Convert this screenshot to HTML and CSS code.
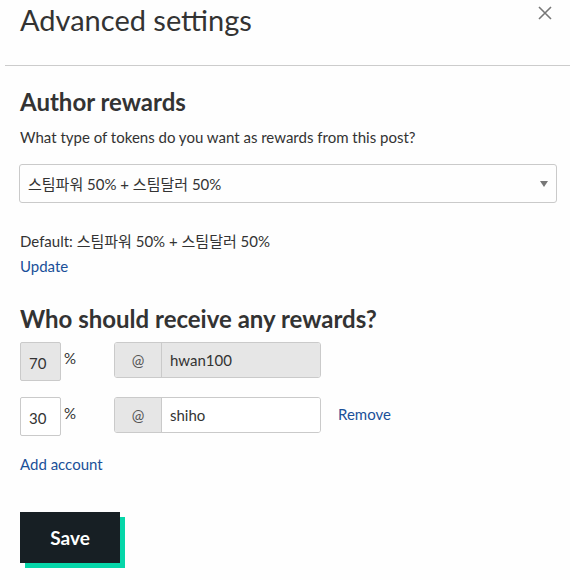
FILE: index.html
```html
<!DOCTYPE html>
<html>
<head>
<meta charset="utf-8">
<link rel="stylesheet" href="styles.css">
</head>
<body>
<div class="modal">
  <div class="header">
    <h1 class="title">Advanced settings</h1>
    <button class="close" aria-label="Close">
      <svg width="14" height="14" viewBox="0 0 14 14"><path d="M1 1 L13 13 M13 1 L1 13" stroke="#777" stroke-width="1.6" fill="none"/></svg>
    </button>
  </div>
  <hr class="divider">
  <section class="section">
    <h2 class="heading">Author rewards</h2>
    <p class="help">What type of tokens do you want as rewards from this post?</p>
    <div class="select">
      <span class="select-text">스팀파워 50% + 스팀달러 50%</span>
      <svg class="caret" width="8" height="6" viewBox="0 0 8 6"><path d="M0 0 L8 0 L4 6 Z" fill="#777"/></svg>
    </div>
    <p class="default">Default: 스팀파워 50% + 스팀달러 50%</p>
    <a class="link">Update</a>
  </section>
  <section class="section beneficiaries">
    <h2 class="heading">Who should receive any rewards?</h2>
    <div class="row">
      <div class="pct disabled">70</div>
      <span class="pct-sign">%</span>
      <div class="account">
        <span class="addon">@</span>
        <span class="acct-input disabled">hwan100</span>
      </div>
    </div>
    <div class="row">
      <div class="pct">30</div>
      <span class="pct-sign">%</span>
      <div class="account">
        <span class="addon">@</span>
        <span class="acct-input">shiho</span>
      </div>
      <a class="link remove">Remove</a>
    </div>
    <a class="link add">Add account</a>
  </section>
  <div class="actions">
    <button class="save">Save</button>
  </div>
</div>
</body>
</html>
```
FILE: styles.css
```css
html, body {
  margin: 0;
  padding: 0;
  background: #fefefe;
}
body {
  font-family: "Lato", "Noto Sans CJK KR", sans-serif;
  color: #333;
}
.modal {
  padding: 0 13px 14px 20px;
}
.header {
  display: flex;
  justify-content: space-between;
  align-items: flex-start;
  height: 65px;
}
.title {
  margin: 3px 0 0 0;
  font-size: 29px;
  font-weight: 400;
  line-height: 34px;
  color: #333;
}
.close {
  border: none;
  background: none;
  padding: 0;
  margin: 6px 5px 0 0;
  width: 14px;
  height: 14px;
  display: block;
}
.close svg { display: block; }
.divider {
  border: none;
  border-top: 1px solid #ccc;
  margin: 0 -13px 0 -15px;
}
.section {
  display: flex;
  flex-direction: column;
  align-items: flex-start;
}
.heading {
  margin: 21px 0 0 0;
  font-size: 24px;
  font-weight: 700;
  line-height: 30px;
  color: #333;
}
.help {
  margin: 11px 0 0 0;
  font-size: 15px;
  line-height: 18px;
}
.select {
  box-sizing: border-box;
  align-self: stretch;
  margin: 18px 0 0 -1px;
  height: 39px;
  border: 1px solid #cacaca;
  border-radius: 3px;
  display: flex;
  align-items: center;
  justify-content: space-between;
  padding: 0 8px 0 8px;
  font-size: 15px;
}
.default {
  margin: 29px 0 0 0;
  font-size: 15px;
  line-height: 18px;
}
.link {
  color: #1a5099;
  font-size: 15px;
  line-height: 18px;
  cursor: pointer;
}
.section > .link { margin-top: 7px; }
.beneficiaries .heading { margin-top: 29px; }
.row {
  display: flex;
  align-items: flex-start;
  margin-top: 8px;
}
.row + .row { margin-top: 16px; }
.pct {
  box-sizing: border-box;
  width: 41px;
  height: 39px;
  border: 1px solid #cacaca;
  border-radius: 2px;
  font-size: 15px;
  padding: 11px 0 0 8px;
  background: #fff;
}
.disabled { background: #e6e6e6; }
.pct-sign {
  font-size: 15px;
  margin: 7px 0 0 3px;
  width: 50px;
}
.account {
  box-sizing: border-box;
  display: flex;
  width: 207px;
  height: 36px;
  border: 1px solid #cacaca;
  border-radius: 3px;
  overflow: hidden;
  font-size: 15px;
}
.addon {
  width: 46px;
  background: #e6e6e6;
  border-right: 1px solid #cacaca;
  display: flex;
  align-items: center;
  justify-content: center;
  color: #555;
}
.acct-input {
  flex: 1;
  display: flex;
  align-items: center;
  padding-left: 8px;
  background: #fff;
}
.acct-input.disabled { background: #e6e6e6; }
.remove {
  margin: 8px 0 0 17px;
}
.section > .link.add { margin-top: 19px; }
.actions {
  margin-top: 39px;
}
.save {
  width: 100px;
  height: 51px;
  border: none;
  background: #171f24;
  color: #fff;
  font-family: "Lato", sans-serif;
  font-weight: 700;
  font-size: 19px;
  box-shadow: 5px 5px 0 #06d6a9;
  padding: 0;
  display: block;
}
```
